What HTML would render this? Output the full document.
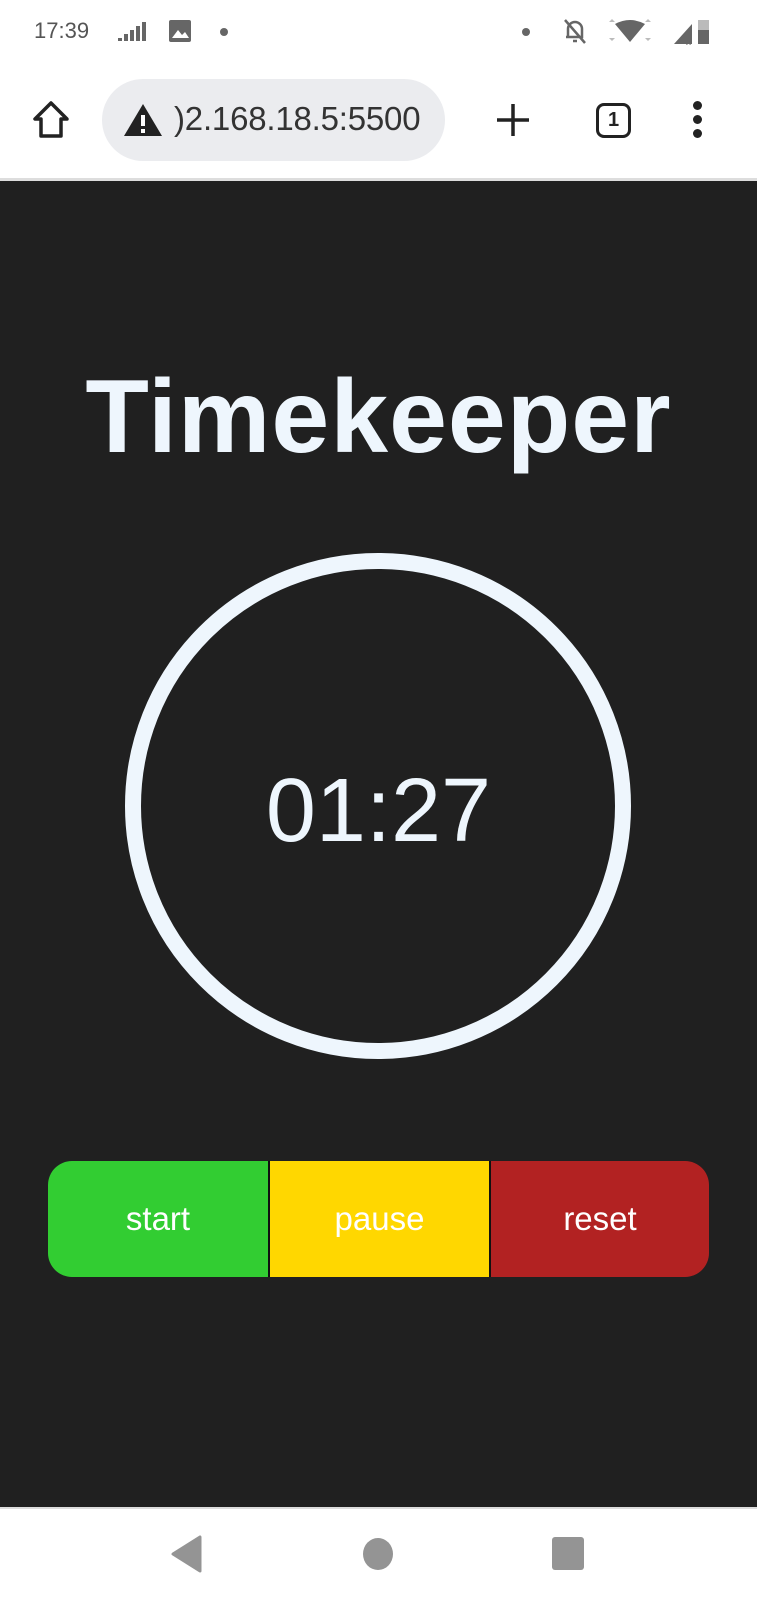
<!DOCTYPE html>
<html><head><meta charset="utf-8"><style>
*{margin:0;padding:0;box-sizing:border-box}
body{width:757px;height:1600px;overflow:hidden;background:#fff;font-family:"Liberation Sans",sans-serif;position:relative}
.abs{position:absolute}
</style></head><body>
<!-- status bar -->
<div class="abs" style="left:34px;top:18px;font-size:22px;color:#555">17:39</div>
<svg class="abs" style="left:118px;top:22px" width="32" height="22" viewBox="0 0 32 22" fill="#666"><rect x="0" y="16" width="4" height="3"/><rect x="6" y="12" width="4" height="7"/><rect x="12" y="8" width="4" height="11"/><rect x="18" y="4" width="4" height="15"/><rect x="24" y="0" width="4" height="19"/></svg>
<svg class="abs" style="left:169px;top:20px" width="24" height="24"><rect x="0" y="0" width="22" height="22" rx="2" fill="#666"/><path d="M3 18 L9 10 L13 15 L16 12 L20 18Z" fill="#fff"/></svg>
<div class="abs" style="left:220px;top:28px;width:8px;height:8px;border-radius:50%;background:#666"></div>
<div class="abs" style="left:522px;top:28px;width:8px;height:8px;border-radius:50%;background:#666"></div>
<svg class="abs" style="left:562px;top:17px" width="26" height="28" viewBox="0 0 26 28" fill="none" stroke="#666" stroke-width="2.5"><path d="M6 20 V12 a7 7 0 0 1 14 0 V20 H4 M11 24 h4 M3 3 L23 26"/></svg>
<svg class="abs" style="left:605px;top:18px" width="50" height="26" viewBox="0 0 50 26"><path d="M4 4 l3 -3 l3 3z M4 20 l3 3 l3-3z M40 4 l3 -3 l3 3z M40 20 l3 3 l3-3z" fill="#bbb"/><path d="M10 6 Q25 -2 40 6 L25 24Z" fill="#666"/></svg>
<svg class="abs" style="left:672px;top:20px" width="40" height="26"><path d="M2 24 L20 4 V24Z" fill="#666"/><text x="14" y="25" font-size="10" fill="#666">x</text><rect x="26" y="0" width="11" height="24" fill="#bbb"/><rect x="26" y="10" width="11" height="14" fill="#666"/></svg>
<!-- toolbar -->
<svg class="abs" style="left:32px;top:100px" width="38" height="40" viewBox="0 0 38 40" fill="none" stroke="#222" stroke-width="3.5" stroke-linejoin="round"><path d="M19 3 L3 19 H9 V36 H29 V19 H35 Z"/></svg>
<div class="abs" style="left:102px;top:79px;width:343px;height:82px;border-radius:41px;background:#ebecef"></div>
<svg class="abs" style="left:123px;top:103px" width="40" height="34" viewBox="0 0 40 34"><path d="M20 1 L39 33 H1Z" fill="#222"/><rect x="18" y="12" width="4" height="11" fill="#fff"/><rect x="18" y="26" width="4" height="4" fill="#fff"/></svg>
<div class="abs" style="left:174px;top:100px;font-size:33px;color:#333;letter-spacing:-0.2px;white-space:nowrap">)2.168.18.5:5500</div>
<svg class="abs" style="left:495px;top:102px" width="36" height="36" stroke="#222" stroke-width="3.5"><path d="M18 2 V34 M2 18 H34"/></svg>
<div class="abs" style="left:596px;top:103px;width:35px;height:35px;border:3.5px solid #222;border-radius:8px;font-size:20px;font-weight:bold;text-align:center;line-height:28px;color:#222">1</div>
<div class="abs" style="left:693px;top:101px;width:9px;height:9px;border-radius:50%;background:#222;box-shadow:0 14px 0 #222,0 28px 0 #222"></div>
<div class="abs" style="left:0;top:178px;width:757px;height:3px;background:#ddd"></div>
<!-- content -->
<div class="abs" style="left:0;top:181px;width:757px;height:1326px;background:#202020"></div>
<div class="abs" style="left:0;top:358px;width:757px;text-align:center;font-size:104px;color:#eef6fd;letter-spacing:1px;font-weight:bold">Timekeeper</div>
<div class="abs" style="left:125px;top:553px;width:506px;height:506px;border-radius:50%;border:16px solid #eef6fd"></div>
<div class="abs" style="left:0;top:760px;width:757px;text-align:center;font-size:90px;color:#eef6fd">01:27</div>
<div class="abs" style="left:48px;top:1161px;width:661px;height:116px;border-radius:24px;overflow:hidden;display:flex;font-size:33px;color:#fff">
<div style="width:220px;background:#32cd32;text-align:center;line-height:116px">start</div>
<div style="width:2px;background:#111"></div>
<div style="width:219px;background:#ffd700;text-align:center;line-height:116px">pause</div>
<div style="width:2px;background:#111"></div>
<div style="flex:1;background:#b22222;text-align:center;line-height:116px">reset</div>
</div>
<!-- nav -->
<div class="abs" style="left:0;top:1507px;width:757px;height:2px;background:#ddd"></div>
<svg class="abs" style="left:170px;top:1535px" width="36" height="38"><path d="M3 19 L30 2 V36Z" fill="#949494" stroke="#949494" stroke-width="3" stroke-linejoin="round"/></svg>
<div class="abs" style="left:363px;top:1538px;width:30px;height:32px;border-radius:50%;background:#949494"></div>
<div class="abs" style="left:552px;top:1537px;width:32px;height:33px;border-radius:3px;background:#949494"></div>
</body></html>
